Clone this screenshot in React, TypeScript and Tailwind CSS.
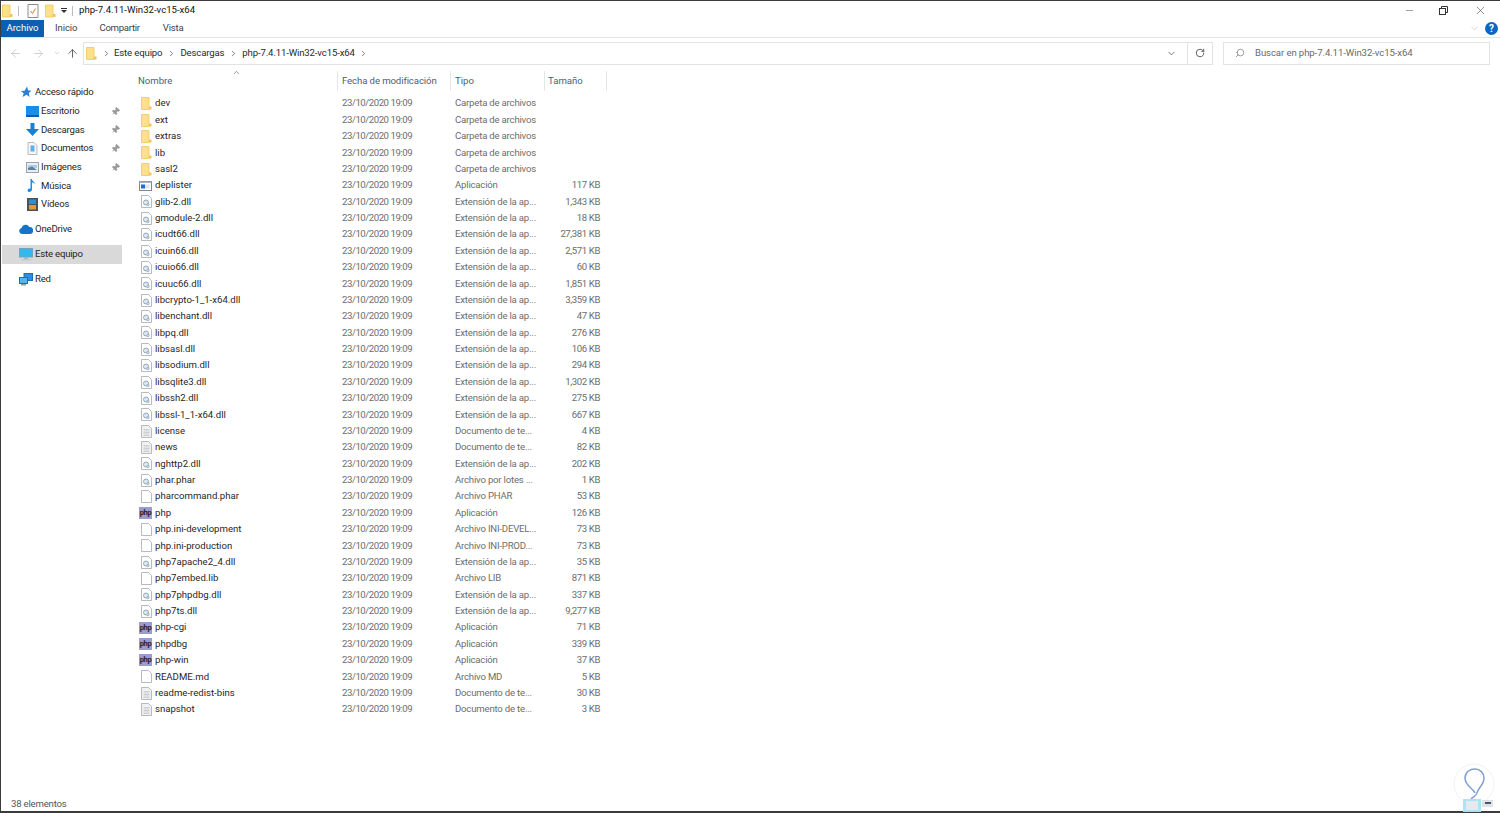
import React from 'react';
import { ArrowLeft, ArrowRight, ArrowUp, ChevronDown, ChevronRight, ChevronUp, Minus, Pin, RotateCw, Search, X } from 'lucide-react';

type Kind = 'folder' | 'exe' | 'dll' | 'blank' | 'php' | 'text' | 'phar';
type Row = [string, Kind, string, string];

const DLL = 'Extensión de la ap...';
const DOC = 'Documento de te...';
const APP = 'Aplicación';
const DIR = 'Carpeta de archivos';

const files: Row[] = [
  ['dev', 'folder', DIR, ''],
  ['ext', 'folder', DIR, ''],
  ['extras', 'folder', DIR, ''],
  ['lib', 'folder', DIR, ''],
  ['sasl2', 'folder', DIR, ''],
  ['deplister', 'exe', APP, '117 KB'],
  ['glib-2.dll', 'dll', DLL, '1,343 KB'],
  ['gmodule-2.dll', 'dll', DLL, '18 KB'],
  ['icudt66.dll', 'dll', DLL, '27,381 KB'],
  ['icuin66.dll', 'dll', DLL, '2,571 KB'],
  ['icuio66.dll', 'dll', DLL, '60 KB'],
  ['icuuc66.dll', 'dll', DLL, '1,851 KB'],
  ['libcrypto-1_1-x64.dll', 'dll', DLL, '3,359 KB'],
  ['libenchant.dll', 'dll', DLL, '47 KB'],
  ['libpq.dll', 'dll', DLL, '276 KB'],
  ['libsasl.dll', 'dll', DLL, '106 KB'],
  ['libsodium.dll', 'dll', DLL, '294 KB'],
  ['libsqlite3.dll', 'dll', DLL, '1,302 KB'],
  ['libssh2.dll', 'dll', DLL, '275 KB'],
  ['libssl-1_1-x64.dll', 'dll', DLL, '667 KB'],
  ['license', 'text', DOC, '4 KB'],
  ['news', 'text', DOC, '82 KB'],
  ['nghttp2.dll', 'dll', DLL, '202 KB'],
  ['phar.phar', 'phar', 'Archivo por lotes ...', '1 KB'],
  ['pharcommand.phar', 'blank', 'Archivo PHAR', '53 KB'],
  ['php', 'php', APP, '126 KB'],
  ['php.ini-development', 'blank', 'Archivo INI-DEVEL...', '73 KB'],
  ['php.ini-production', 'blank', 'Archivo INI-PROD...', '73 KB'],
  ['php7apache2_4.dll', 'dll', DLL, '35 KB'],
  ['php7embed.lib', 'blank', 'Archivo LIB', '871 KB'],
  ['php7phpdbg.dll', 'dll', DLL, '337 KB'],
  ['php7ts.dll', 'dll', DLL, '9,277 KB'],
  ['php-cgi', 'php', APP, '71 KB'],
  ['phpdbg', 'php', APP, '339 KB'],
  ['php-win', 'php', APP, '37 KB'],
  ['README.md', 'blank', 'Archivo MD', '5 KB'],
  ['readme-redist-bins', 'text', DOC, '30 KB'],
  ['snapshot', 'text', DOC, '3 KB'],
];

function FolderIcon({ width = 11, height = 13 }: { width?: number; height?: number }) {
  return (
    <svg width={width} height={height} viewBox="0 0 11 13" className="shrink-0">
      <path d="M.5 .5h7.500v12H.5z" fill="#fde08a" stroke="#f2c55c" strokeWidth="0.8" />
      <path d="M8 9.500h2.500v3H8z" fill="#f2c55c" />
    </svg>
  );
}

function FileIcon({ kind }: { kind: Kind }) {
  if (kind === 'folder') return <FolderIcon />;
  if (kind === 'php') {
    return (
      <div className="w-[13px] h-[12px] bg-[#9a9ccb] text-[#1e2036] text-[7.5px] leading-[11px] font-bold text-center tracking-[-0.4px] shrink-0 ml-[-2px]">php</div>
    );
  }
  if (kind === 'exe') {
    return (
      <svg width="13" height="12" viewBox="0 0 13 12" className="shrink-0 ml-[-2px]">
        <rect x="0.5" y="1.500" width="12" height="9" fill="#fff" stroke="#7d8894" />
        <rect x="0.5" y="1.500" width="12" height="1.500" fill="#aab3bd" />
        <rect x="2" y="4.500" width="4" height="4" fill="#1c6fd0" />
        <rect x="6" y="4.500" width="4.500" height="4" fill="#dbe6f2" />
      </svg>
    );
  }
  return (
    <svg width="11" height="13" viewBox="0 0 11 13" className="shrink-0">
      <path d="M.5 .5h7l3 3v9h-10z" fill={kind === 'text' ? '#f1f1f1' : '#fff'} stroke="#a5a9ad" strokeWidth="0.8" />
      {kind === 'text' && <path d="M2.500 4.500h6M2.500 6h6M2.500 7.500h6M2.500 9h6M2.500 10.500h6" stroke="#b5b8bb" strokeWidth="0.6" />}
      {(kind === 'dll' || kind === 'phar') && (
        <>
          <circle cx="5" cy="7.500" r="2.500" fill="#dfe8ef" stroke="#8aa0b5" strokeWidth="0.9" />
          <circle cx="7" cy="9.500" r="1.300" fill="#c6d7e6" stroke="#8aa0b5" strokeWidth="0.6" />
        </>
      )}
    </svg>
  );
}

function NavIcon({ name }: { name: string }) {
  switch (name) {
    case 'star':
      return (
        <svg width="12" height="12" viewBox="0 0 12 12"><path d="M7 .5l1 3.800 3.500.4-2.700 2.400.9 4-3.200-2.300L2.500 11l1.200-3.800L.8 5l3.800-.3z" fill="#2b7fd4" /></svg>
      );
    case 'desk':
      return (
        <svg width="13" height="11" viewBox="0 0 13 11"><rect width="13" height="9.500" fill="#1a8ee6" /><rect y="9" width="13" height="2" fill="#0d5fae" /></svg>
      );
    case 'down':
      return (
        <svg width="13" height="13" viewBox="0 0 13 13"><path d="M4.500 0h4v6H13L6.500 13 0 6h4.500z" fill="#1c7fd6" /></svg>
      );
    case 'docs':
      return (
        <svg width="11" height="13" viewBox="0 0 11 13"><path d="M1 .5h6l3 3v9H1z" fill="#f4f6f8" stroke="#a5a9ad" strokeWidth="0.8" /><rect x="3.500" y="3.500" width="4" height="6" fill="#5bb1ea" /></svg>
      );
    case 'img':
      return (
        <svg width="13" height="11" viewBox="0 0 13 11"><rect x="0.5" y="0.5" width="12" height="10" fill="#e9eef2" stroke="#9aa3ab" /><path d="M2 3h9v3H2z" fill="#a8cdea" /><path d="M2 6l4-1.500L11 8H2z" fill="#5f7f94" /></svg>
      );
    case 'music':
      return (
        <svg width="11" height="13" viewBox="0 0 11 13"><path d="M3.500 0h1.300c.3 2.400 3 2.800 3.800 5.200-1-1-2.600-1.600-3.600-1.600v7c0 1.300-1.300 2.400-2.700 2.400-1 0-1.800-.6-1.800-1.500 0-1.100 1.200-2 2.300-2 .3 0 .5 0 .7.1z" fill="#1a8fe3" /></svg>
      );
    case 'video':
      return (
        <svg width="11" height="13" viewBox="0 0 11 13"><rect width="11" height="13" fill="#46525c" /><rect x="2" y="1.500" width="7" height="4.500" fill="#2c8fd8" /><rect x="2" y="7" width="7" height="4.500" fill="#e39a34" /></svg>
      );
    case 'cloud':
      return (
        <svg width="14" height="10" viewBox="0 0 14 10"><path d="M3 10a3 3 0 01-.5-5.900A4.200 4.200 0 0110.300 3 3.500 3.500 0 0111 10z" fill="#1573c9" /></svg>
      );
    case 'pc':
      return (
        <svg width="14" height="13" viewBox="0 0 14 13"><rect x="0.5" y="0.5" width="13" height="8.500" fill="#32b8ee" stroke="#6fa6c2" /><rect x="5" y="9" width="4" height="2" fill="#a9b4bc" /><rect x="2" y="11" width="10" height="1.500" fill="#c3cbd1" /></svg>
      );
    default:
      return (
        <svg width="14" height="13" viewBox="0 0 14 13"><rect x="5" y="0.5" width="8.500" height="7" fill="#2a8fdc" stroke="#1c6fb1" /><rect x="0.5" y="4.500" width="8" height="6" fill="#58b3ec" stroke="#1c6fb1" /><rect x="2" y="11" width="5" height="1.500" fill="#8d99a3" /></svg>
      );
  }
}

function NavItem({ icon, label, pinned, indent, active }: { icon: string; label: string; pinned?: boolean; indent?: boolean; active?: boolean }) {
  return (
    <div className={`h-[18.7px] flex items-center ${indent ? 'pl-[23px]' : 'pl-[17px]'} ${active ? 'bg-[#d9d9d9]' : ''}`}>
      <div className={`flex items-center justify-center w-[14px] ${indent ? 'mr-[2px]' : 'mr-[2px]'}`}><NavIcon name={icon} /></div>
      <span className="flex-1 text-[#1f1f1f] tracking-[-0.2px]">{label}</span>
      {pinned && <Pin size={9} className="mr-[2px] text-[#9a9a9a] rotate-45" fill="#9a9a9a" />}
    </div>
  );
}

function Crumb({ label }: { label: string }) {
  return (
    <>
      <span className="tracking-[-0.15px]">{label}</span>
      <ChevronRight size={9} className="text-[#555] mx-[4.500px]" />
    </>
  );
}

function ColHead({ label, className }: { label: string; className: string }) {
  return <div className={`h-[20px] flex items-center border-r border-[#e5e5e5] ${className}`}>{label}</div>;
}

export default function App() {
  return (
    <div className="w-[1500px] h-[813px] bg-white border-l border-t border-[#3c3c3c] flex flex-col overflow-hidden text-[9.6px] text-[#2a2a2a] font-['Roboto','Noto_Sans',sans-serif] relative">
      {/* barra de titulo */}
      <div className="h-[19px] flex items-center shrink-0">
        <div className="flex items-center pl-[1px]">
          <FolderIcon width={11} height={14} />
          <div className="w-px h-[10px] bg-[#bbb] ml-[5px] mr-[8px]" />
          <svg width="12" height="14" viewBox="0 0 12 14" className="mr-[6px]">
            <path d="M1 .5h10v13H1z" fill="#fff" stroke="#8d8d8d" />
            <path d="M3.500 7l2 2.500 3-5" fill="none" stroke="#d07a3c" strokeWidth="1" />
          </svg>
          <FolderIcon width={11} height={14} />
          <div className="w-[8px] ml-[4px] flex flex-col items-center gap-[1px]">
            <div className="w-[6px] h-px bg-[#333]" />
            <div className="w-0 h-0 border-l-[3px] border-r-[3px] border-t-[3px] border-l-transparent border-r-transparent border-t-[#333]" />
          </div>
          <div className="w-px h-[10px] bg-[#bbb] ml-[4px] mr-[6px]" />
        </div>
        <span className="text-[#111]">php-7.4.11-Win32-vc15-x64</span>
        <div className="ml-auto flex items-center text-[#333]">
          <Minus size={11} strokeWidth={1} className="mr-[24px]" />
          <svg width="9" height="9" viewBox="0 0 9 9" className="mr-[26px]" fill="none" stroke="#333"><rect x="0.5" y="2.500" width="6" height="6" /><path d="M2.500 2.500v-2h6v6h-2" /></svg>
          <X size={13} strokeWidth={1} className="mr-[13px]" />
        </div>
      </div>

      {/* cinta */}
      <div className="h-[18px] flex items-center border-b border-[#e3e3e3] shrink-0">
        <div className="h-full w-[43px] bg-[#0a5fb0] text-white flex items-center justify-center">Archivo</div>
        <span className="ml-[11px] text-[#444] tracking-[-0.1px]">Inicio</span>
        <span className="ml-[22px] text-[#444] tracking-[-0.3px]">Compartir</span>
        <span className="ml-[23px] text-[#444] tracking-[-0.2px]">Vista</span>
        <ChevronDown size={11} className="ml-auto text-[#aaa] mr-[5px]" strokeWidth={1} />
        <div className="w-[13px] h-[13px] rounded-full bg-[#0a66c2] text-white text-[10px] font-bold flex items-center justify-center mr-[2px]">?</div>
      </div>

      {/* direcciones */}
      <div className="h-[30px] flex items-center shrink-0">
        <ArrowLeft size={13} strokeWidth={1.5} className="ml-[8px] text-[#c4c4c4]" />
        <ArrowRight size={13} strokeWidth={1.5} className="ml-[10px] text-[#c4c4c4]" />
        <ChevronDown size={8} className="ml-[8px] text-[#c4c4c4]" />
        <ArrowUp size={13} strokeWidth={1.5} className="ml-[5px] text-[#444]" />
        <div className="ml-[4px] w-[1130px] h-[23px] border border-[#e3e3e3] flex items-center">
          <div className="ml-[2px]"><FolderIcon /></div>
          <ChevronRight size={9} className="text-[#555] ml-[5px] mr-[3px]" />
          <Crumb label="Este equipo" />
          <Crumb label="Descargas" />
          <Crumb label="php-7.4.11-Win32-vc15-x64" />
          <div className="ml-auto h-full flex items-center">
            <ChevronDown size={11} strokeWidth={1.5} className="text-[#444] mr-[10px]" />
            <div className="h-full w-[25px] border-l border-[#e3e3e3] flex items-center justify-center">
              <RotateCw size={10} className="text-[#444]" />
            </div>
          </div>
        </div>
        <div className="ml-[10px] w-[267px] h-[23px] border border-[#e3e3e3] flex items-center text-[#6a6a6a] tracking-[-0.1px]">
          <Search size={10} className="ml-[11px] mr-[10px] text-[#8a8a8a] -scale-x-100" />
          Buscar en php-7.4.11-Win32-vc15-x64
        </div>
      </div>

      <div className="flex flex-1 min-h-0">
        {/* panel de navegacion */}
        <div className="w-[136px] shrink-0 pt-[15px] pr-[15px] pl-[1px]">
          <NavItem icon="star" label="Acceso rápido" />
          <NavItem icon="desk" label="Escritorio" pinned indent />
          <NavItem icon="down" label="Descargas" pinned indent />
          <NavItem icon="docs" label="Documentos" pinned indent />
          <NavItem icon="img" label="Imágenes" pinned indent />
          <NavItem icon="music" label="Música" indent />
          <NavItem icon="video" label="Vídeos" indent />
          <div className="h-[6.300px]" />
          <NavItem icon="cloud" label="OneDrive" />
          <div className="h-[6.300px]" />
          <NavItem icon="pc" label="Este equipo" active />
          <div className="h-[6.300px]" />
          <NavItem icon="net" label="Red" />
        </div>

        {/* lista de archivos */}
        <div className="flex-1 min-w-0 relative pt-[3px]">
          <ChevronUp size={9} className="absolute left-[95px] top-0 text-[#777]" />
          <div className="flex text-[#4c607a]">
            <ColHead label="Nombre" className="w-[201px] pl-[1px]" />
            <ColHead label="Fecha de modificación" className="w-[113px] pl-[4px] tracking-[-0.1px]" />
            <ColHead label="Tipo" className="w-[94px] pl-[4px]" />
            <ColHead label="Tamaño" className="w-[62px] pl-[3px]" />
          </div>
          <div className="pt-[4.500px]">
            {files.map(([name, kind, type, size]) => (
              <div key={name} className="flex items-center h-[16.380px]">
                <div className="w-[201px] flex items-center pl-[4px] text-[#1f1f1f]">
                  <FileIcon kind={kind} />
                  <span className="ml-[3px]">{name}</span>
                </div>
                <div className="w-[113px] pl-[4px] text-[#6d6d6d] tracking-[-0.45px]">23/10/2020 19:09</div>
                <div className="w-[94px] pl-[4px] text-[#6d6d6d] whitespace-nowrap tracking-[-0.2px]">{type}</div>
                <div className="w-[55px] text-right text-[#6d6d6d] tracking-[-0.4px]">{size}</div>
              </div>
            ))}
          </div>
        </div>
      </div>

      {/* barra de estado */}
      <div className="h-[20px] flex items-center pl-[10px] pt-[5px] text-[#555] shrink-0 border-b-[2px] border-[#3c3c3c] tracking-[-0.2px]">38 elementos</div>

      {/* marca de agua */}
      <svg width="44" height="50" viewBox="0 0 44 50" className="absolute right-[3px] bottom-[1px]">
        <circle cx="21" cy="22" r="20" fill="none" stroke="#e6ebf7" strokeWidth="0.7" />
        <path d="M22 31c-1-4-10-7-10-15 0-6 5-9 10-9s9 4 9 9c0 7-6 10-7 15-.5 3-4 4-6 6" fill="none" stroke="#7f9fd6" strokeWidth="1.500" />
        <rect x="10" y="37" width="18" height="13" fill="#a9e4f7" />
        <rect x="13" y="39" width="12" height="9" fill="#e6eaee" />
        <rect x="29" y="38" width="11" height="7" fill="#dfe3e7" />
        <rect x="32" y="40" width="6" height="2" fill="#3b5a78" />
      </svg>
    </div>
  );
}
